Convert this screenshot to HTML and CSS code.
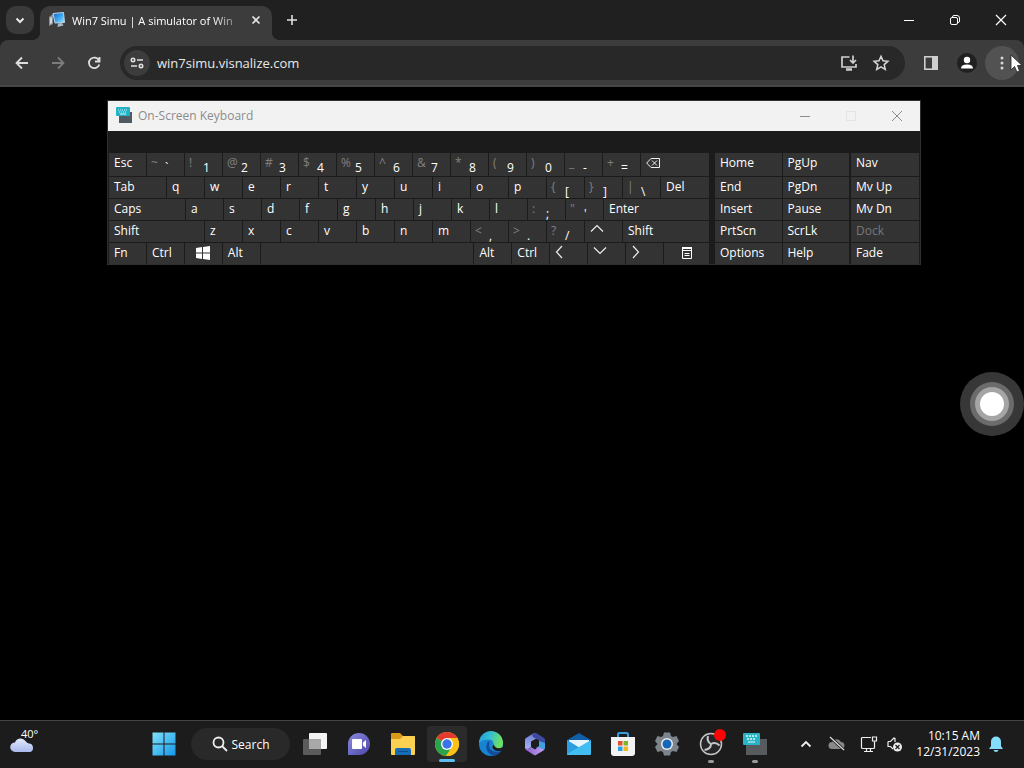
FILE: index.html
```html
<!DOCTYPE html>
<html lang="en">
<head>
  <meta charset="UTF-8">
  <title>Win7 Simu</title>
  <link rel="stylesheet" href="styles.css">
</head>
<body>
<header class="browser">
  <div class="tabstrip">
    <button class="tab-search" aria-label="Search tabs">
      <svg width="20" height="20" viewBox="0 0 20 20"><path d="M6.5 8.500l3.500 3.500 3.500-3.500" fill="none" stroke="#e8e8e8" stroke-width="2"/></svg>
    </button>
    <div class="tab">
      <svg width="18" height="18" viewBox="0 0 18 18">
        <defs>
          <linearGradient id="screen" x1="0" y1="0" x2="1" y2="1"><stop offset="0" stop-color="#1c5fc0"/><stop offset=".5" stop-color="#36a3f0"/><stop offset="1" stop-color="#a9e8fb"/></linearGradient>
        </defs>
        <path d="M1 6l4-3v10l-4 2z" fill="#8a9297"/>
        <path d="M2 7l2-1v6l-2 1z" fill="#cfd6da"/>
        <path d="M5 2.500L15.500 1.500 16.500 11.500 7 12z" fill="url(#screen)" stroke="#b9d9ee"/>
        <path d="M10 12.500l4-.5 1.500 2.500-6 1.500z" fill="#a9bac5"/>
      </svg>
      <span class="tab-title">Win7 Simu | A simulator of Win</span>
      <button class="tab-close" aria-label="Close tab">
        <svg width="16" height="16" viewBox="0 0 16 16"><path d="M4.500 4.500l7 7m0-7l-7 7" stroke="#e8e8e8" stroke-width="1.600"/></svg>
      </button>
    </div>
    <button class="new-tab" aria-label="New tab">
      <svg width="16" height="16" viewBox="0 0 16 16"><path d="M8 3v10M3 8h10" stroke="#e0e0e0" stroke-width="1.600"/></svg>
    </button>
    <div class="window-buttons">
      <button aria-label="Minimize"><svg width="12" height="12" viewBox="0 0 12 12"><path d="M1 6.500h10" stroke="#fff"/></svg></button>
      <button aria-label="Restore"><svg width="12" height="12" viewBox="0 0 12 12" fill="none" stroke="#fff"><rect x="1.500" y="3.500" width="7" height="7" rx="1.500"/><path d="M3.500 3.500v-.5q0-1.500 1.500-1.500h3q2.500 0 2.500 2.500v3q0 1.500-1.500 1.500h-.5"/></svg></button>
      <button aria-label="Close"><svg width="12" height="12" viewBox="0 0 12 12"><path d="M1 1l10 10M11 1L1 11" stroke="#fff" stroke-width="1.200"/></svg></button>
    </div>
  </div>
  <div class="toolbar">
    <button class="tool" aria-label="Back">
      <svg width="16" height="16" viewBox="0 0 16 16" fill="none" stroke="#dedede" stroke-width="1.800"><path d="M14 8H3M8 2.500L2.500 8 8 13.500"/></svg>
    </button>
    <button class="tool" aria-label="Forward">
      <svg width="16" height="16" viewBox="0 0 16 16" fill="none" stroke="#7c7c7c" stroke-width="1.800"><path d="M2 8h11M8 2.500L13.500 8 8 13.500"/></svg>
    </button>
    <button class="tool" aria-label="Reload">
      <svg width="16" height="16" viewBox="0 0 16 16" fill="none" stroke="#dedede" stroke-width="1.800"><path d="M13 5.500A5.300 5.300 0 1 0 13.300 9.500M13.500 2v4.500H9"/></svg>
    </button>
    <div class="address">
      <button class="site-info" aria-label="Site information">
        <svg width="14" height="14" viewBox="0 0 14 14" fill="none" stroke="#e0e0e0" stroke-width="1.600"><circle cx="3" cy="4" r="1.700"/><path d="M7 4h6M1 10h6"/><circle cx="11" cy="10" r="1.700"/></svg>
      </button>
      <input class="url" type="text" value="win7simu.visnalize.com" aria-label="Address">
      <button class="tool" aria-label="Install app">
        <svg width="18" height="18" viewBox="0 0 18 18" fill="none" stroke="#cfcfcf" stroke-width="1.700"><path d="M9.500 3H2v10h14v-3M13 1.500v7M10 6l3 3 3-3"/><path d="M6 15.500h6" stroke-width="2.500"/></svg>
      </button>
      <button class="tool" aria-label="Bookmark">
        <svg width="18" height="18" viewBox="0 0 18 18" fill="none" stroke="#d6d6d6" stroke-width="1.500"><path d="M9 2.300l2 4.500 4.900.5-3.700 3.300 1.100 4.800L9 12.900l-4.300 2.500 1.100-4.800L2.100 7.300 7 6.800z"/></svg>
      </button>
    </div>
    <button class="tool side-panel" aria-label="Side panel">
      <svg width="16" height="16" viewBox="0 0 16 16"><rect x="1.800" y="1.800" width="12.400" height="12.400" fill="none" stroke="#cfcfcf" stroke-width="1.600"/><path d="M9 2h5v12H9z" fill="#cfcfcf"/></svg>
    </button>
    <button class="tool" aria-label="Profile">
      <svg width="20" height="20" viewBox="0 0 20 20"><circle cx="10" cy="10" r="10" fill="#202020"/><circle cx="10" cy="7" r="3.200" fill="#fff"/><path d="M4 15.500q0-4 6-4t6 4z" fill="#fff"/></svg>
    </button>
    <button class="tool menu" aria-label="Menu">
      <svg width="16" height="16" viewBox="0 0 16 16" fill="#d6d6d6"><circle cx="8" cy="3" r="1.500"/><circle cx="8" cy="8" r="1.500"/><circle cx="8" cy="13" r="1.500"/></svg>
    </button>
  </div>
</header>

<main class="desktop">
  <section class="osk">
    <div class="osk-title">
      <svg width="18" height="18" viewBox="0 0 18 18"><rect x="4" y="5" width="13" height="11" fill="#4f5a61"/><rect x="1" y="0" width="14" height="9" rx="1" fill="#22b2c6"/><path d="M3 3h10M4 5h8" stroke="#d8f8fc" stroke-dasharray="1 1"/><path d="M5 7h6" stroke="#d8f8fc"/></svg>
      <h1>On-Screen Keyboard</h1>
      <button aria-label="Minimize keyboard"><svg width="12" height="12" viewBox="0 0 12 12"><path d="M1 6.500h10" stroke="#8c8c8c"/></svg></button>
      <button aria-label="Maximize keyboard" disabled><svg width="12" height="12" viewBox="0 0 12 12"><rect x="1.500" y="1.500" width="9" height="9" fill="none" stroke="#e4e4e4"/></svg></button>
      <button aria-label="Close keyboard"><svg width="12" height="12" viewBox="0 0 12 12"><path d="M1 1l10 10M11 1L1 11" stroke="#8c8c8c"/></svg></button>
    </div>
    <div class="osk-body">
      <div class="keys">
        <div class="row">
          <button>Esc</button>
          <button class="dual"><small>~</small><span>`</span></button>
          <button class="dual"><small>!</small><span>1</span></button>
          <button class="dual"><small>@</small><span>2</span></button>
          <button class="dual"><small>#</small><span>3</span></button>
          <button class="dual"><small>$</small><span>4</span></button>
          <button class="dual"><small>%</small><span>5</span></button>
          <button class="dual"><small>^</small><span>6</span></button>
          <button class="dual"><small>&amp;</small><span>7</span></button>
          <button class="dual"><small>*</small><span>8</span></button>
          <button class="dual"><small>(</small><span>9</span></button>
          <button class="dual"><small>)</small><span>0</span></button>
          <button class="dual"><small>_</small><span>-</span></button>
          <button class="dual"><small>+</small><span>=</span></button>
          <button class="backspace" aria-label="Backspace"><svg width="14" height="16" viewBox="0 0 14 16" fill="none" stroke="#eee"><path d="M5 5.500h8.500v9H5L.7 10zM6 7.500l5 5m0-5l-5 5"/></svg></button>
        </div>
        <div class="row">
          <button class="tab-key">Tab</button>
          <button>q</button>
          <button>w</button>
          <button>e</button>
          <button>r</button>
          <button>t</button>
          <button>y</button>
          <button>u</button>
          <button>i</button>
          <button>o</button>
          <button>p</button>
          <button class="dual"><small>{</small><span>[</span></button>
          <button class="dual"><small>}</small><span>]</span></button>
          <button class="dual"><small>|</small><span>\</span></button>
          <button class="del">Del</button>
        </div>
        <div class="row">
          <button class="caps">Caps</button>
          <button>a</button>
          <button>s</button>
          <button>d</button>
          <button>f</button>
          <button>g</button>
          <button>h</button>
          <button>j</button>
          <button>k</button>
          <button>l</button>
          <button class="dual"><small>:</small><span>;</span></button>
          <button class="dual"><small>"</small><span>'</span></button>
          <button class="enter">Enter</button>
        </div>
        <div class="row">
          <button class="left-shift">Shift</button>
          <button>z</button>
          <button>x</button>
          <button>c</button>
          <button>v</button>
          <button>b</button>
          <button>n</button>
          <button>m</button>
          <button class="dual"><small>&lt;</small><span>,</span></button>
          <button class="dual"><small>&gt;</small><span>.</span></button>
          <button class="dual"><small>?</small><span>/</span></button>
          <button aria-label="Up"><svg width="14" height="16" viewBox="0 0 14 16" fill="none" stroke="#eee" stroke-width="1.200"><path d="M1 10.500l6-6 6 6"/></svg></button>
          <button class="right-shift">Shift</button>
        </div>
        <div class="row">
          <button>Fn</button>
          <button>Ctrl</button>
          <button class="icon-key" aria-label="Windows"><svg width="14" height="18" viewBox="0 0 14 18" fill="#fff"><path d="M0 5l6-1v5.500H0zM7 3.900L14 3v6.500H7zM0 10.500h6V16l-6-1zM7 10.500h7V17l-7-.9z"/></svg></button>
          <button>Alt</button>
          <button class="space" aria-label="Space"></button>
          <button>Alt</button>
          <button>Ctrl</button>
          <button aria-label="Left"><svg width="10" height="16" viewBox="0 0 10 16" fill="none" stroke="#eee" stroke-width="1.200"><path d="M7 3L1.500 9 7 15"/></svg></button>
          <button aria-label="Down"><svg width="14" height="16" viewBox="0 0 14 16" fill="none" stroke="#eee" stroke-width="1.200"><path d="M1 4.500l6 6 6-6"/></svg></button>
          <button aria-label="Right"><svg width="10" height="16" viewBox="0 0 10 16" fill="none" stroke="#eee" stroke-width="1.200"><path d="M2 3l5.500 6L2 15"/></svg></button>
          <button class="icon-key menu-key" aria-label="Menu key"><svg width="12" height="18" viewBox="0 0 12 18" fill="none" stroke="#fff"><path d="M1.500 4.500h9v11h-9zM1 7.500h10M3.500 10.500h5M3.500 12.500h5"/><path d="M1 5h10" stroke-width="2"/></svg></button>
        </div>
      </div>
      <div class="keys nav-keys">
        <div class="row"><button>Home</button><button>PgUp</button></div>
        <div class="row"><button>End</button><button>PgDn</button></div>
        <div class="row"><button>Insert</button><button>Pause</button></div>
        <div class="row"><button>PrtScn</button><button>ScrLk</button></div>
        <div class="row"><button>Options</button><button>Help</button></div>
      </div>
      <div class="keys window-keys">
        <div class="row"><button>Nav</button></div>
        <div class="row"><button>Mv Up</button></div>
        <div class="row"><button>Mv Dn</button></div>
        <div class="row"><button disabled>Dock</button></div>
        <div class="row"><button>Fade</button></div>
      </div>
    </div>
  </section>
  <button class="assist" aria-label="Assistive touch">
    <svg width="64" height="64" viewBox="0 0 64 64"><circle cx="32" cy="32" r="32" fill="#373737"/><circle cx="32" cy="32" r="22" fill="#6b6b6b"/><circle cx="32" cy="32" r="17" fill="#a5a5a5"/><circle cx="32" cy="32" r="12" fill="#fff"/></svg>
  </button>
</main>

<footer class="taskbar">
  <button class="weather">
    <svg width="26" height="18" viewBox="0 0 26 18"><defs><linearGradient id="cloud" x1="0" y1="0" x2="0" y2="1"><stop offset="0" stop-color="#e3e9fb"/><stop offset="1" stop-color="#a9b9ec"/></linearGradient></defs><path d="M5 17a4.800 4.800 0 0 1 0-9.600A6 6 0 0 1 15.500 6q1.500 2 3.500 2.600a4.300 4.300 0 0 1 1 8.400z" fill="url(#cloud)"/></svg>
    <span>40°</span>
  </button>
  <button class="app" aria-label="Start">
    <svg width="24" height="24" viewBox="0 0 24 24"><defs><linearGradient id="win" x1="0" y1="0" x2="1" y2="1"><stop offset="0" stop-color="#7fe3fb"/><stop offset="1" stop-color="#1596e8"/></linearGradient></defs><path d="M0.500 .5h11v11h-11zM12.500 .5h11v11h-11zM.5 12.500h11v11h-11zM12.500 12.500h11v11h-11z" fill="url(#win)"/></svg>
  </button>
  <button class="search">
    <svg width="16" height="16" viewBox="0 0 16 16" fill="none" stroke="#eee" stroke-width="1.800"><circle cx="6.500" cy="6.500" r="5"/><path d="M10 10l5 5"/></svg>
    Search
  </button>
  <button class="app" aria-label="Task view">
    <svg width="26" height="26" viewBox="0 0 26 26"><rect x="7" y="2" width="18" height="16" rx="1" fill="#f4f4f4"/><path d="M1 9q0-1 1-1h17v15q0 1-1 1H2q-1 0-1-1z" fill="#5b5b5b"/><path d="M7 8h12v10H7z" fill="#a8a8a8"/></svg>
  </button>
  <button class="app" aria-label="Chat">
    <svg width="26" height="26" viewBox="0 0 26 26"><defs><linearGradient id="chat" x1="0" y1="0" x2="1" y2="1"><stop offset="0" stop-color="#8b8be0"/><stop offset="1" stop-color="#4d47a8"/></linearGradient></defs><path d="M13 2a11 11 0 1 1 0 22H2V13A11 11 0 0 1 13 2z" fill="url(#chat)"/><rect x="6" y="8" width="10" height="10" rx="1" fill="#fff"/><path d="M17 11.500L20 9v8l-3-2.500z" fill="#fff"/></svg>
  </button>
  <button class="app" aria-label="File Explorer">
    <svg width="26" height="26" viewBox="0 0 26 26"><path d="M1 3q0-1 1-1h8l3 3h11q1 0 1 1v6H1z" fill="#d99b17"/><path d="M1 8h9l3-3h11q1 0 1 1v17q0 1-1 1H2q-1 0-1-1z" fill="#fcd050"/><path d="M5 24v-5q0-2 2-2h12q2 0 2 2v5z" fill="#176cb8"/><path d="M8 20h10v1H8z" fill="#0e4d8c"/></svg>
  </button>
  <button class="app active" aria-label="Chrome">
    <svg width="26" height="26" viewBox="0 0 26 26"><circle cx="13" cy="13" r="12" fill="#fbc116"/><path d="M13 13L2.600 7A12 12 0 0 1 23.400 7z" fill="#e33b2e"/><path d="M2.600 7A12 12 0 0 0 12 25l6-9-5-3z" fill="#2ba24c"/><path d="M13 7h10.400A12 12 0 0 1 12 25l6-9z" fill="#fbc116"/><circle cx="13" cy="13" r="6" fill="#fff"/><circle cx="13" cy="13" r="4.700" fill="#3975e8"/></svg>
  </button>
  <button class="app" aria-label="Edge">
    <svg width="26" height="26" viewBox="0 0 26 26"><defs><linearGradient id="edge" x1="0" y1="0" x2="1" y2=".3"><stop offset="0" stop-color="#2496dc"/><stop offset=".5" stop-color="#35c0d0"/><stop offset="1" stop-color="#6fdf64"/></linearGradient></defs><circle cx="13" cy="13" r="12" fill="#1784d2"/><path d="M1 12a12 12 0 0 1 24 0q.2 6-6 6-5 0-5-2 1.500-1 1.500-3.500 0-4-5-4-7 0-9.500 3.500z" fill="url(#edge)"/><path d="M10 10q-5 10 5 14.800 6-.8 8.500-5-8 2.500-11.500-2-1.500-3-.5-7z" fill="#164c9c"/><path d="M14 16q1.500-1 1.500-3 2 6 9 3.500l-1 3q-7 2-9.500-3.500z" fill="#1c1c1c"/></svg>
  </button>
  <button class="app" aria-label="Microsoft 365">
    <svg width="26" height="26" viewBox="0 0 26 26">
      <defs>
        <linearGradient id="officeLeft" x1="0" y1="0" x2="0" y2="1"><stop offset="0" stop-color="#6c7fd6"/><stop offset="1" stop-color="#a7b2f2"/></linearGradient>
        <linearGradient id="officeBottom" x1="0" y1="0" x2="1" y2="0"><stop offset="0" stop-color="#8b5fd0"/><stop offset="1" stop-color="#c49bf0"/></linearGradient>
      </defs>
      <path d="M12 2L4 7q-1 .5-1 2v8q1 3 6-1v-5.500L17 6z" fill="url(#officeLeft)"/>
      <path d="M12 2q1-.5 3 .5L22 7q1 .7 1 2v6l-6-3V9.500L11 6q-2-2 1-4z" fill="#3f4a9e"/>
      <path d="M17 10l6 2v5q0 1-1 2l-5 3-3-5 3-2z" fill="#3f9fe0"/>
      <path d="M3 17q4 2 6-1l4 2.500 4-2.500 5 3-8 5q-1 .6-2 0L4 19q-1-1-1-2z" fill="url(#officeBottom)"/>
    </svg>
  </button>
  <button class="app" aria-label="Mail">
    <svg width="26" height="26" viewBox="0 0 26 26"><path d="M1 9l12-7 12 7v8H1z" fill="#0f5ea6"/><path d="M3 9h20v8H3z" fill="#e6f5fd"/><path d="M1 9l13 8-13 7z" fill="#2b9fe0"/><path d="M25 9v14q0 1-1 1H2q-1 0-1-1z" fill="#42bdf2"/></svg>
  </button>
  <button class="app" aria-label="Microsoft Store">
    <svg width="26" height="26" viewBox="0 0 26 26"><path d="M8 8V3.500Q8 2 9.500 2h7Q18 2 18 3.500V8" fill="none" stroke="#3b9be0" stroke-width="2"/><path d="M1 6h24v16q0 3-3 3H4q-3 0-3-3z" fill="#f3f3f3"/><path d="M8 10h4.500v4.500H8z" fill="#e0522c"/><path d="M13.500 10H18v4.500h-4.500z" fill="#7cb52a"/><path d="M8 15.500h4.500V20H8z" fill="#2b9fe0"/><path d="M13.500 15.500H18V20h-4.500z" fill="#f5b51b"/></svg>
  </button>
  <button class="app" aria-label="Settings">
    <svg width="26" height="26" viewBox="0 0 26 26"><path d="M10 1.500h6l1 3.500 2 1 3.500-1 2.500 5-2.500 3 2.500 3-2.500 5-3.500-1-2 1-1 3.500h-6L9 21l-2-1-3.500 1L1 16l2.500-3L1 10l2.500-5L7 6l2-1z" fill="#7d858b"/><circle cx="13" cy="13" r="6" fill="#e8eef2"/><circle cx="13" cy="13" r="4.500" fill="#1767b8"/></svg>
  </button>
  <button class="app open" aria-label="OBS Studio">
    <svg width="30" height="30" viewBox="0 0 30 30">
      <circle cx="15" cy="15" r="10.500" fill="#26262a" stroke="#c4c4c4" stroke-width="1.500"/>
      <g fill="none" stroke="#c4c4c4" stroke-width="2">
        <path d="M15 15q-4.500-2.500-3-8"/>
        <path d="M15 15q4.500-2.500 8.500 1.500"/>
        <path d="M15 15q0 5-6.500 6"/>
      </g>
      <circle cx="24" cy="6" r="6" fill="#fa0505"/>
    </svg>
  </button>
  <button class="app open" aria-label="On-Screen Keyboard">
    <svg width="26" height="26" viewBox="0 0 26 26"><rect x="4" y="8" width="21" height="16" fill="#575b5e"/><rect x="1" y="2" width="17" height="12" rx="1" fill="#28b4c4"/><path d="M4 5h11M5 8h9" stroke="#e0fafd" stroke-width="1.500" stroke-dasharray="2 1"/><path d="M6 11h7" stroke="#e0fafd"/></svg>
  </button>
  <div class="tray">
    <button aria-label="Show hidden icons"><svg width="12" height="12" viewBox="0 0 12 12"><path d="M1.500 8.500L6 4l4.500 4.500" fill="none" stroke="#eee" stroke-width="1.800"/></svg></button>
    <button class="onedrive" aria-label="OneDrive"><svg width="18" height="16" viewBox="0 0 18 16"><path d="M4 13a3.500 3.500 0 0 1 0-7 5 5 0 0 1 9 0 3.600 3.600 0 0 1 1 7z" fill="#888"/><path d="M2 1l14 13" stroke="#1c1c1c" stroke-width="3"/><path d="M2 1l14 13" stroke="#ddd" stroke-width="1.200"/></svg></button>
    <button aria-label="Network"><svg width="18" height="18" viewBox="0 0 18 18" fill="none" stroke="#eee" stroke-width="1.200"><path d="M11 2.500H2.500Q1.500 2.500 1.500 3.500v9q0 1 1 1h11q1 0 1-1V9M4 16.500h9M6.500 14v2M10.500 14v2M12.500 2h4v4h-4zM14.500 6v3"/></svg></button>
    <button aria-label="Volume muted"><svg width="18" height="18" viewBox="0 0 18 18" fill="none" stroke="#eee" stroke-width="1.200"><path d="M9 3v4M2 6.500h2.500L8.500 2.500M2 6.500v5h2.500L7 14"/><circle cx="11.500" cy="12" r="4.500" fill="#eee" stroke="none"/><path d="M9.500 10l4 4m0-4l-4 4" stroke="#1c1c1c"/></svg></button>
    <time class="clock"><span>10:15 AM</span><span>12/31/2023</span></time>
    <button aria-label="Notifications"><svg width="16" height="18" viewBox="0 0 16 18" fill="#85dcfb"><path d="M8 1.500a5 5 0 0 1 5 5V11l2 3H1l2-3V6.500a5 5 0 0 1 5-5zM5.500 15h5q-.5 2-2.500 2t-2.500-2z"/></svg></button>
  </div>
</footer>

<svg class="cursor" width="14" height="20" viewBox="0 0 14 20"><path d="M1 1v15l3.500-3.500L7 18l2.500-1L7.500 11.500H12z" fill="#fff" stroke="#222" stroke-width=".8"/></svg>
</body>
</html>
```
FILE: styles.css
```css
* {
  box-sizing: border-box;
}

body {
  margin: 0;
  min-height: 100vh;
  display: flex;
  flex-direction: column;
  position: relative;
  overflow: hidden;
  background: #000;
  color: #fff;
  font-family: "Open Sans", "Noto Sans", sans-serif;
  font-size: 12px;
}

button {
  margin: 0;
  padding: 0;
  border: 0;
  background: none;
  color: inherit;
  font: inherit;
}

svg {
  display: block;
  flex: none;
}

/* browser */
.browser {
  background: #1f201f;
}

.tabstrip {
  display: flex;
  height: 40px;
  padding-left: 6px;
}

.tab-search {
  display: grid;
  place-items: center;
  width: 28px;
  height: 28px;
  margin: 6px 6px 0 0;
  border-radius: 10px;
  background: #3a3a3a;
}

.tab {
  position: relative;
  display: flex;
  align-items: center;
  width: 232px;
  height: 34px;
  margin-top: 6px;
  padding: 0 8px 6px;
  border-radius: 10px 10px 0 0;
  background: #3c3c3c;
}

.tab::before,
.tab::after {
  content: "";
  position: absolute;
  bottom: 0;
  width: 8px;
  height: 8px;
}

.tab::before {
  right: 100%;
  background: radial-gradient(circle at 0 0, #1f201f 8px, #3c3c3c 8px);
}

.tab::after {
  left: 100%;
  background: radial-gradient(circle at 100% 0, #1f201f 8px, #3c3c3c 8px);
}

.tab-title {
  flex: 1;
  margin-left: 6px;
  font-size: 11px;
  white-space: nowrap;
  -webkit-mask-image: linear-gradient(to right, #000 80%, transparent);
  mask-image: linear-gradient(to right, #000 80%, transparent);
}

.new-tab {
  width: 16px;
  margin-left: 12px;
}

.window-buttons {
  display: flex;
  margin-left: auto;
}

.window-buttons button {
  display: grid;
  place-items: center;
  width: 46px;
}

.toolbar {
  display: flex;
  align-items: center;
  height: 47px;
  padding: 0 5px 0 4px;
  border-bottom: 2px solid #464646;
  border-radius: 8px 8px 0 0;
  background: #3c3c3c;
}

.tool {
  display: grid;
  place-items: center;
  width: 36px;
  height: 34px;
}

.tool + .address {
  margin-left: 8px;
}

.address {
  flex: 1;
  display: flex;
  align-items: center;
  height: 34px;
  padding: 0 8px 0 4px;
  border-radius: 17px;
  background: #282828;
}

.address .tool {
  width: 32px;
}

.site-info {
  display: grid;
  place-items: center;
  width: 26px;
  height: 26px;
  border-radius: 50%;
  background: #3c3c3c;
}

.url {
  flex: 1;
  min-width: 0;
  margin-left: 7px;
  padding: 0;
  border: 0;
  outline: 0;
  background: none;
  color: #e8e8e8;
  font: inherit;
  font-size: 13px;
}

.side-panel {
  margin-left: 8px;
}

.menu {
  width: 34px;
  border-radius: 50%;
  background: #525252;
}

/* desktop */
.desktop {
  flex: 1;
}

.osk {
  margin: 13px 103px 0 107px;
  border: 1px solid #303030;
  background: #1b1b1b;
}

.osk-title {
  display: flex;
  align-items: center;
  height: 30px;
  padding-left: 7px;
  background: #f2f2f2;
}

.osk-title h1 {
  flex: 1;
  margin: 0 0 0 5px;
  color: #8c8c8c;
  font-size: 12px;
  font-weight: 400;
  line-height: 28px;
}

.osk-title button {
  display: grid;
  place-items: center;
  width: 46px;
  height: 28px;
}

.osk-body {
  display: flex;
  padding: 22px 1px 0;
}

.keys {
  flex: 600 1 0;
  display: flex;
  flex-direction: column;
  gap: 1px;
}

.nav-keys {
  flex-grow: 134;
  margin-left: 6px;
}

.window-keys {
  flex-grow: 68;
  margin-left: 2px;
}

.row {
  display: flex;
  gap: 1px;
}

.row button {
  flex: 37 1 0;
  display: flex;
  min-width: 0;
  height: 21px;
  background: #333;
  line-height: 19px;
  text-align: left;
}

.row:first-child button {
  height: 23px;
  line-height: 20px;
}

/* left inset as an item, so padding does not change the key widths */
.row button::before {
  content: "";
  flex: none;
  width: 5px;
}

.row button:disabled {
  color: #777;
}

.row .backspace {
  flex-grow: 68;
}

.row .tab-key {
  flex-grow: 57;
}

.row .del {
  flex-grow: 48;
}

.row .caps {
  flex-grow: 76;
}

.row .enter {
  flex-grow: 105;
}

.row .left-shift {
  flex-grow: 95;
}

.row .right-shift {
  flex-grow: 86;
}

.row .space {
  flex-grow: 213;
}

.row .menu-key {
  flex-grow: 45;
}

.row .icon-key {
  justify-content: center;
}

.row .icon-key::before {
  display: none;
}

.row .dual::before {
  width: 4px;
}

.dual small {
  width: 14px;
  color: #808080;
  font-size: 12px;
}

.dual span {
  padding-top: 5px;
}

.assist {
  position: absolute;
  top: 372px;
  right: 0;
}

/* taskbar */
.taskbar {
  display: flex;
  align-items: center;
  height: 48px;
  padding-bottom: 1px;
  border-top: 1px solid #444;
  background: #1c1c1c;
}

.weather {
  position: relative;
  width: 132px;
  margin-left: 10px;
}

.weather span {
  position: absolute;
  top: -9px;
  left: 11px;
  font-size: 11px;
}

.app {
  position: relative;
  display: grid;
  place-items: center;
  width: 44px;
  height: 40px;
}

.active {
  border: 2px solid #1c1c1c;
  border-radius: 6px;
  background: #2b2b2b;
}

.active::after,
.open::after {
  content: "";
  position: absolute;
  bottom: 0;
  width: 6px;
  height: 3px;
  border-radius: 2px;
  background: #999;
}

.open::after {
  bottom: 1px;
}

.active::after {
  width: 16px;
  background: #5ebdf0;
}

.search {
  display: flex;
  align-items: center;
  justify-content: center;
  gap: 4px;
  width: 99px;
  height: 32px;
  margin: 0 3px 0 5px;
  border-radius: 16px;
  background: #292929;
}

.tray {
  display: flex;
  align-items: center;
  gap: 8px;
  margin-left: auto;
  padding-right: 20px;
}

.tray .onedrive {
  margin: 0 6px 0 8px;
}

.clock {
  display: flex;
  flex-direction: column;
  margin-left: 4px;
  font-size: 12px;
  line-height: 16px;
  text-align: right;
}

.cursor {
  position: absolute;
  top: 54px;
  right: 0;
}
```
